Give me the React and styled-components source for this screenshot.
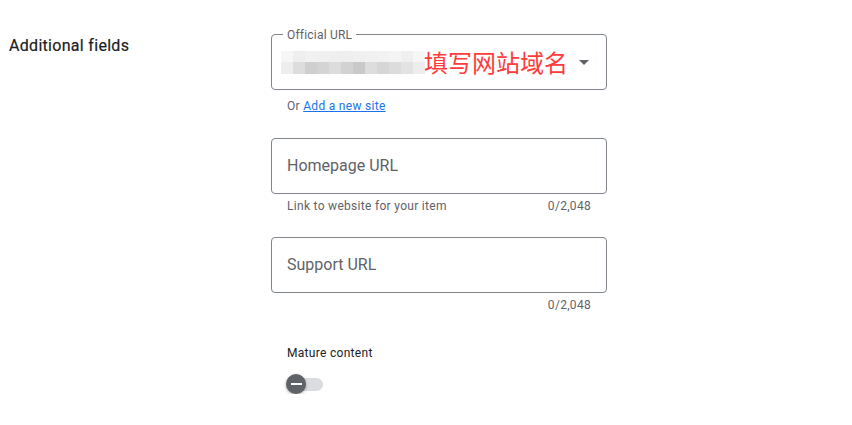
import React from 'react';
import styled, { createGlobalStyle } from 'styled-components';

const GlobalStyle = createGlobalStyle`
  html, body {
    margin: 0;
    padding: 0;
    background: #ffffff;
  }
  body {
    font-family: Roboto, "Noto Sans", Arial, sans-serif;
    color: #202124;
  }
`;

const Page = styled.div`
  display: flex;
  align-items: flex-start;
  padding: 34px 0 0 9px;
`;

const SectionTitle = styled.div`
  width: 262px;
  flex: none;
  margin-top: 2px;
  font-size: 16px;
  line-height: 20px;
  font-weight: 400;
  letter-spacing: 0.3px;
  color: #202124;
  -webkit-text-stroke: 0.2px #202124;
`;

const Column = styled.div`
  width: 336px;
  display: flex;
  flex-direction: column;
`;

const Field = styled.div`
  position: relative;
  height: 56px;
  box-sizing: border-box;
  border: 1px solid #80868b;
  border-radius: 4px;
  display: flex;
  align-items: center;
  padding: 0 17px 0 15px;
  margin-top: ${(p) => p.$top || 0}px;
`;

const FloatLabel = styled.span`
  position: absolute;
  left: 11px;
  top: -8px;
  padding: 0 4px;
  background: #ffffff;
  font-size: 12px;
  line-height: 16px;
  letter-spacing: 0.2px;
  color: #5f6368;
`;

const Placeholder = styled.span`
  font-size: 16px;
  line-height: 24px;
  color: #5f6368;
`;

const Blur = styled.div`
  display: grid;
  grid-template-columns: repeat(12, 12px);
  grid-template-rows: 11px 12px;
  margin-left: -6px;
`;

const Cell = styled.span`
  background: ${(p) => p.$c};
`;

const Annotation = styled.span`
  font-family: "Noto Sans CJK SC", "Noto Sans", sans-serif;
  font-size: 24px;
  line-height: 28px;
  color: #ff3b3b;
  margin-left: -1px;
`;

const Caret = styled.span`
  margin-left: auto;
  width: 0;
  height: 0;
  border-left: 5px solid transparent;
  border-right: 5px solid transparent;
  border-top: 5px solid #5f6368;
`;

const Helper = styled.div`
  display: flex;
  justify-content: space-between;
  padding: 0 16px;
  margin-top: ${(p) => p.$top}px;
  font-size: 12px;
  line-height: 16px;
  letter-spacing: 0.3px;
  color: #5f6368;
`;

const Counter = styled.span`
  margin-left: auto;
`;

const LinkText = styled.a`
  color: #1a73e8;
  text-decoration: underline;
  cursor: pointer;
`;

const SwitchLabel = styled.div`
  margin-top: 32px;
  padding-left: 16px;
  font-size: 12px;
  line-height: 16px;
  letter-spacing: 0.3px;
  color: #202124;
`;

const Switch = styled.div`
  position: relative;
  width: 38px;
  height: 20px;
  margin: 13px 0 0 15px;
`;

const Track = styled.span`
  position: absolute;
  left: 2px;
  top: 4px;
  width: 35px;
  height: 13px;
  border-radius: 7px;
  background: #dadce0;
`;

const Knob = styled.span`
  position: absolute;
  left: 0;
  top: 0;
  width: 20px;
  height: 20px;
  border-radius: 50%;
  background: #5f6368;
  box-shadow: 0 1px 3px rgba(0, 0, 0, 0.35);
  display: flex;
  align-items: center;
  justify-content: center;

  &::after {
    content: '';
    width: 11px;
    height: 2px;
    background: #ffffff;
  }
`;

const topRow = ['#f6f6f6', '#eeeeee', '#f1f1f1', '#f0f0f0', '#efefef', '#eeeeee', '#f0f0f0', '#f1f1f1', '#f2f2f2', '#f4f4f4', '#efefef', '#f6f6f6'];
const bottomRow = ['#eeeeee', '#dddddd', '#cfcfcf', '#d4d4d4', '#dcdcdc', '#d2d2d2', '#c9c9c9', '#dddddd', '#d6d6d6', '#dcdcdc', '#e3e3e3', '#ededed'];

export default function App() {
  return (
    <>
      <GlobalStyle />
      <Page>
        <SectionTitle>Additional fields</SectionTitle>
        <Column>
          <Field>
            <FloatLabel>Official URL</FloatLabel>
            <Blur>
              {topRow.concat(bottomRow).map((c, i) => (
                <Cell key={i} $c={c} />
              ))}
            </Blur>
            <Annotation>填写网站域名</Annotation>
            <Caret />
          </Field>
          <Helper $top={8}>
            <span>
              Or <LinkText>Add a new site</LinkText>
            </span>
          </Helper>

          <Field $top={24}>
            <Placeholder>Homepage URL</Placeholder>
          </Field>
          <Helper $top={4}>
            <span>Link to website for your item</span>
            <Counter>0/2,048</Counter>
          </Helper>

          <Field $top={23}>
            <Placeholder>Support URL</Placeholder>
          </Field>
          <Helper $top={4}>
            <Counter>0/2,048</Counter>
          </Helper>

          <SwitchLabel>Mature content</SwitchLabel>
          <Switch>
            <Track />
            <Knob />
          </Switch>
        </Column>
      </Page>
    </>
  );
}
